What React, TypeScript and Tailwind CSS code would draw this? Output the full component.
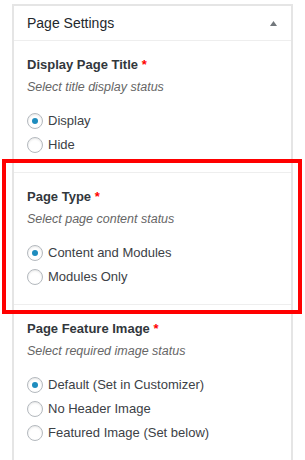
import React from 'react';

type Option = { label: string; checked?: boolean };

type Section = {
  title: string;
  hint: string;
  options: Option[];
};

const sections: Section[] = [
  {
    title: 'Display Page Title',
    hint: 'Select title display status',
    options: [{ label: 'Display', checked: true }, { label: 'Hide' }],
  },
  {
    title: 'Page Type',
    hint: 'Select page content status',
    options: [{ label: 'Content and Modules', checked: true }, { label: 'Modules Only' }],
  },
  {
    title: 'Page Feature Image',
    hint: 'Select required image status',
    options: [
      { label: 'Default (Set in Customizer)', checked: true },
      { label: 'No Header Image' },
      { label: 'Featured Image (Set below)' },
    ],
  },
];

const Radio = ({ checked }: { checked?: boolean }) => (
  <span className="w-4 h-4 rounded-full border border-[#b4b9be] bg-white shadow-[inset_0_1px_2px_rgba(0,0,0,0.1)] flex items-center justify-center shrink-0">
    {checked && <span className="w-[6px] h-[6px] rounded-full bg-[#1e8cbe]" />}
  </span>
);

const SettingsSection = ({ title, hint, options, last }: Section & { last?: boolean }) => (
  <div className={`px-[13px] pt-[14px] ${last ? 'pb-[21px]' : 'pb-[15px] border-b border-[#eeeeee]'}`}>
    <div className="text-[13px] leading-[20px] font-bold text-[#32373c]">
      {title} <span className="text-[#ff0000]">*</span>
    </div>
    <div className="text-[12.5px] leading-[20px] italic text-[#666666] mt-[2px]">{hint}</div>
    <div className="mt-[12px]">
      {options.map((opt) => (
        <label key={opt.label} className="flex items-center gap-[5px] h-[24px] text-[13px] text-[#3c4146]">
          <Radio checked={opt.checked} />
          <span>{opt.label}</span>
        </label>
      ))}
    </div>
  </div>
);

export default function App() {
  return (
    <div
      className="relative w-[305px] h-[460px] bg-white pt-[4px] pl-[12px]"
      style={{ fontFamily: '"Liberation Sans", Arial, sans-serif' }}
    >
      <div className="w-[281px] border-2 border-[#e5e5e5] bg-white">
        {/* Header */}
        <div className="h-[35px] pl-[13px] pr-[14px] flex items-center justify-between border-b border-[#eeeeee]">
          <span className="text-[14px] text-[#23282d]">Page Settings</span>
          <svg width="7" height="5" viewBox="0 0 7 5">
            <path d="M3.5 0 L7 5 L0 5 Z" fill="#72777c" />
          </svg>
        </div>
        {sections.map((s, i) => (
          <SettingsSection key={s.title} {...s} last={i === sections.length - 1} />
        ))}
      </div>

      {/* highlight annotation */}
      <div className="absolute left-[2px] top-[159px] w-[300px] h-[155px] border-4 border-[#ff0000] pointer-events-none" />
    </div>
  );
}
